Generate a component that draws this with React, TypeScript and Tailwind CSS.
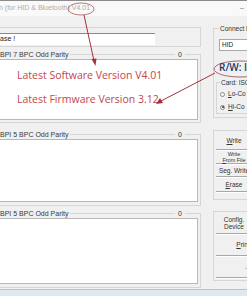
import React from "react";

const ui = { fontFamily: '"Liberation Sans", Arial, sans-serif' };
const big = { fontFamily: '"Open Sans", "Liberation Sans", sans-serif' };

const GroupLabel = ({ text }: { text: string }) => (
  <div className="flex justify-between -mt-[5px] h-[9px] text-[7px] leading-[9px] text-[#3a3a3a]">
    <span className="bg-[#f0f0f0] pr-[2px]">{text}</span>
    <span className="bg-[#f0f0f0] px-[3px] mr-[15px]">0</span>
  </div>
);

const SideButton = ({ children, h }: { children: React.ReactNode; h: string }) => (
  <div
    className={`${h} w-[36px] shrink-0 flex flex-col items-center justify-center border-b border-[#a8a8a8] shadow-[0_1px_0_#ffffff] text-[6.5px] leading-[7px] text-[#333] text-center`}
  >
    {children}
  </div>
);

export default function App() {
  return (
    <div className="relative w-[247px] h-[296px] overflow-hidden bg-[#f0f0f0]" style={ui}>
      {/* title bar */}
      <div className="h-[16px] border-t border-[#8c8c8c] bg-[#f9f9f9] flex items-center justify-between pr-[3px]">
        <span className="text-[7px] text-[#adadad] -ml-[1px] whitespace-nowrap">n (for HID &amp; Bluetooth) V4.01</span>
        <span className="text-[7px] text-[#777]">–</span>
      </div>

      <div className="flex">
        {/* left column */}
        <div className="w-[201px] shrink-0 flex flex-col">
          <div className="mt-[11px] h-[20px] border-y border-r border-[#d6d6d6] flex flex-col">
            <div className="mt-[5px] w-[155px] h-[12px] bg-white border-t border-[#8a8a8a] text-[7px] leading-[10px] text-[#222]">
              ase !
            </div>
          </div>

          <div className="mt-[7px] h-[69px] border-y border-r border-[#d6d6d6]">
            <GroupLabel text="BPI 7 BPC Odd Parity" />
            <div className="mr-[2px] h-[61px] bg-white border-y border-r border-[#b8b8b8] flex flex-col pl-[17px] pt-[9px] gap-[11px]" style={big}>
              <span className="text-[10.5px] leading-[13px] text-[#c5444e] whitespace-nowrap">Latest Software Version V4.01</span>
              <span className="text-[10.5px] leading-[13px] text-[#c5444e] whitespace-nowrap">Latest Firmware Version 3.12</span>
            </div>
          </div>

          <div className="mt-[11px] h-[72px] border-y border-r border-[#d6d6d6]">
            <GroupLabel text="BPI 5 BPC Odd Parity" />
            <div className="mr-[2px] h-[63px] bg-white border-y border-r border-[#b8b8b8]" />
          </div>

          <div className="mt-[7px] h-[75px] border-y border-r border-[#d6d6d6]">
            <GroupLabel text="BPI 5 BPC Odd Parity" />
            <div className="mr-[2px] h-[66px] bg-white border-y border-r border-[#b8b8b8]" />
          </div>
        </div>

        {/* right column */}
        <div className="ml-[12px] flex-1 min-w-0 overflow-hidden flex flex-col">
          <div className="mt-[12px] h-[90px] border-y border-l border-[#d6d6d6] pl-[5px]">
            <div className="-mt-[5px] h-[9px] text-[6.5px] leading-[9px] text-[#333] whitespace-nowrap">
              <span className="bg-[#f0f0f0] px-[1px]">Connect Device</span>
            </div>
            <div className="mt-[6px] h-[12px] bg-white border border-[#a8a8a8] border-r-0 text-[6.5px] leading-[10px] pl-[2px] text-[#222]">
              HID
            </div>
            <div className="mt-[11px] h-[10px] text-[10px] leading-[10px] font-semibold text-[#1e3766] whitespace-nowrap" style={big}>
              R/W: I
            </div>
            <div className="mt-[10px] ml-[-3px] h-[32px] border-t border-l border-b border-[#d6d6d6] pl-[3px]">
              <div className="-mt-[5px] h-[9px] text-[6.5px] leading-[9px] text-[#333] whitespace-nowrap">
                <span className="bg-[#f0f0f0] px-[1px]">Card: ISO</span>
              </div>
              <div className="mt-[3px] h-[8px] flex items-center gap-[3px] text-[6.5px] text-[#333] whitespace-nowrap">
                <span className="w-[5px] h-[5px] shrink-0 rounded-full border border-[#888] bg-white" />
                <span><u>L</u>o-Co</span>
              </div>
              <div className="mt-[5px] h-[8px] flex items-center gap-[3px] text-[6.5px] text-[#333] whitespace-nowrap">
                <span className="w-[5px] h-[5px] shrink-0 rounded-full border border-[#888] bg-white flex items-center justify-center">
                  <span className="w-[2px] h-[2px] rounded-full bg-[#333]" />
                </span>
                <span><u>H</u>i-Co</span>
              </div>
            </div>
          </div>

          <div className="mt-[12px] h-[70px] border-y border-l border-[#d6d6d6] pl-[2px] whitespace-nowrap">
            <SideButton h="h-[18px] mt-[1px]">
              <span><u>W</u>rite</span>
            </SideButton>
            <SideButton h="h-[14px]">
              <span className="text-[5.5px] leading-[6px]">Write</span>
              <span className="text-[5.5px] leading-[6px]"><u>F</u>rom File</span>
            </SideButton>
            <SideButton h="h-[13px]">
              <span>Seg. Write</span>
            </SideButton>
            <SideButton h="h-[15px]">
              <span><u>E</u>rase</span>
            </SideButton>
          </div>

          <div className="mt-[11px] h-[70px] border-y border-l border-[#d6d6d6] pl-[2px] whitespace-nowrap">
            <SideButton h="h-[22px]">
              <span>Config.</span>
              <span>Device</span>
            </SideButton>
            <SideButton h="h-[22px]">
              <span className="pl-[18px]"><u>P</u>rint</span>
            </SideButton>
            <SideButton h="h-[22px]">
              <span className="pl-[28px]">...</span>
            </SideButton>
          </div>
        </div>
      </div>

      {/* bottom bar */}
      <div className="absolute left-0 right-0 bottom-0 h-[7px] bg-[#dfe8ef] border-t border-[#b7c2cb]" />

      {/* annotations */}
      <svg className="absolute inset-0 pointer-events-none" width="247" height="296" viewBox="0 0 247 296">
        <ellipse cx="81" cy="9" rx="13" ry="6" fill="none" stroke="#a85b5b" strokeWidth="0.8" />
        <line x1="84" y1="15" x2="94" y2="61" stroke="#a8303c" strokeWidth="1" />
        <polygon points="95.5,66 91.5,59 96.5,58.5" fill="#a8303c" />
        <ellipse cx="240" cy="69" rx="26" ry="8" fill="none" stroke="#8b4a4a" strokeWidth="0.8" />
        <line x1="215" y1="73" x2="161" y2="101" stroke="#a8303c" strokeWidth="1" />
        <polygon points="156,104 160,98 163,103" fill="#a8303c" />
      </svg>
    </div>
  );
}
